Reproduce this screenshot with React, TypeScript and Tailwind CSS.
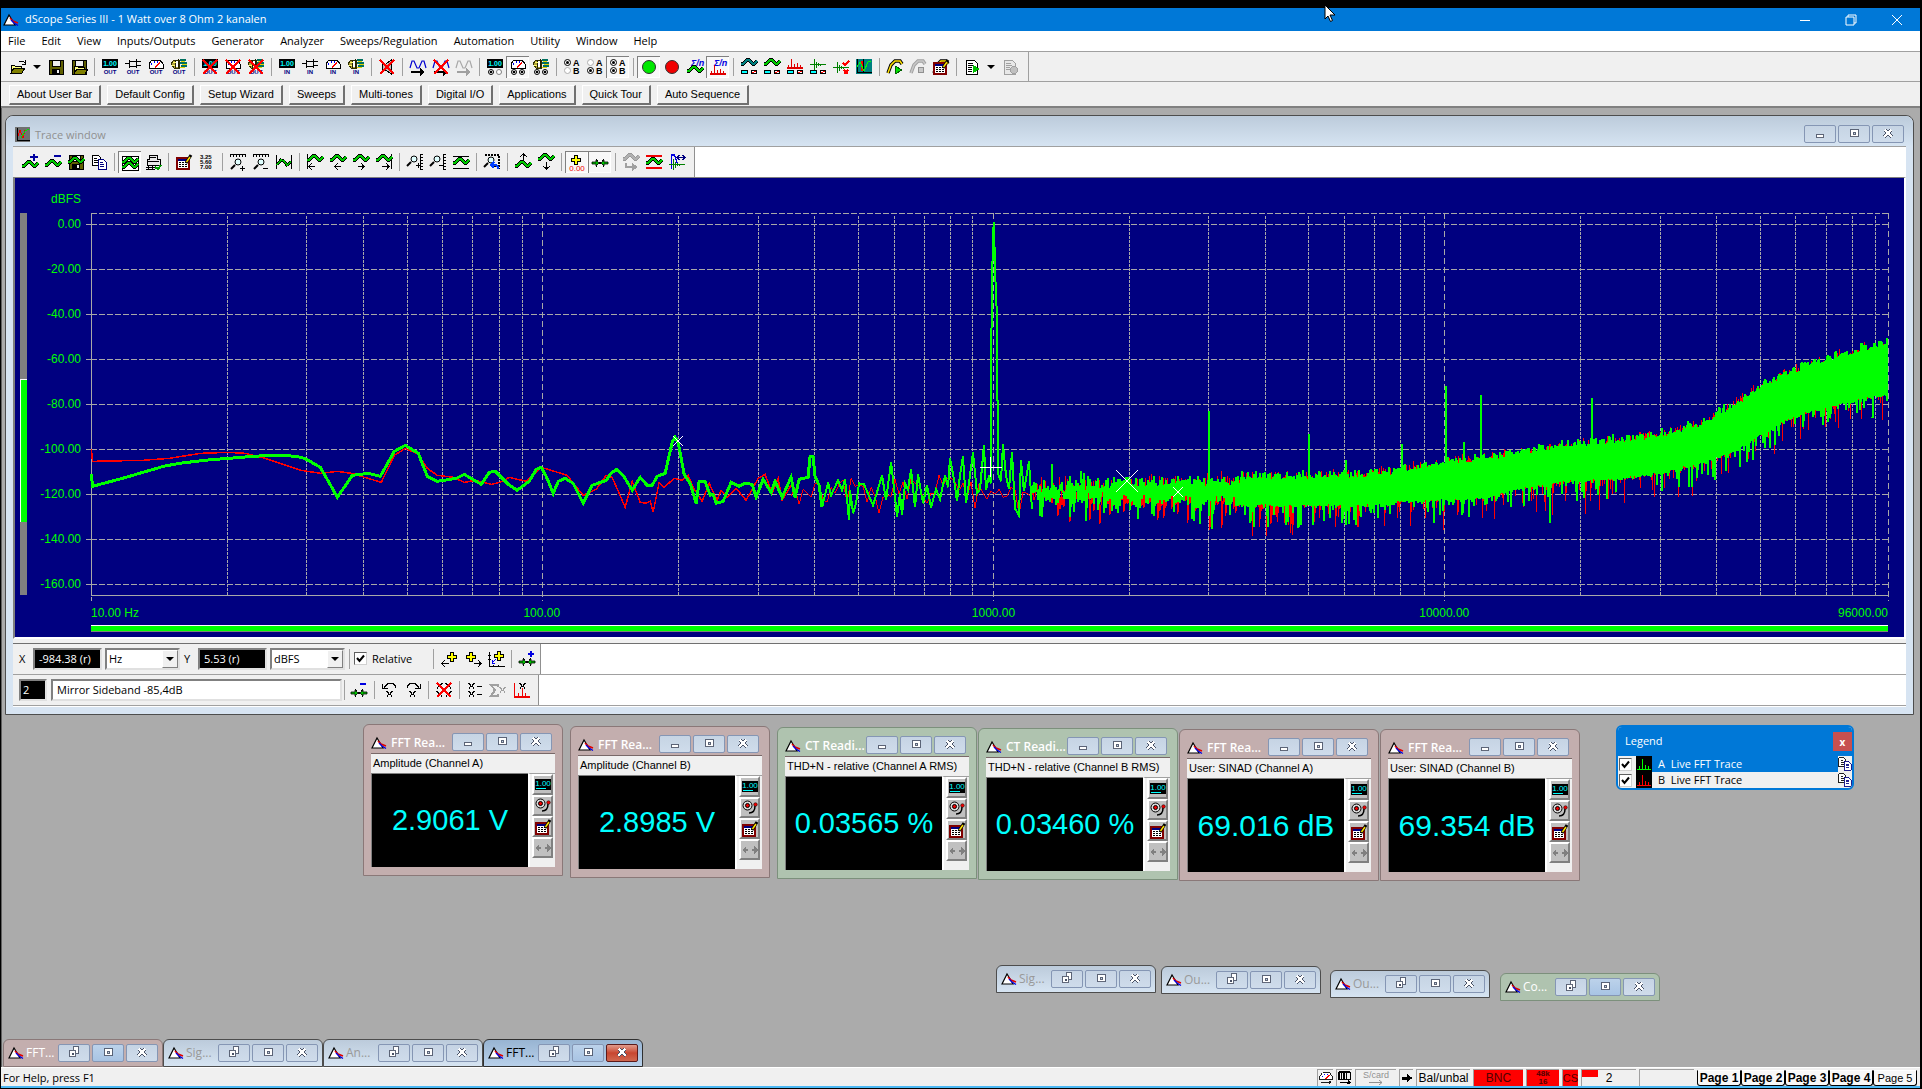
import { Fragment } from "react";
import type { ReactNode } from "react";
import clsx from "clsx";

/* ---------- icon parts, all on a 16x16 grid ---------- */

const RED = "#e00000";
const NAVY = "#000080";

function Icon({ children, className = "w-4 h-4" }: { children: ReactNode; className?: string }) {
  return (
    <svg viewBox="0 0 16 16" className={clsx("shrink-0 overflow-visible", className)} fill="none" shapeRendering="crispEdges" aria-hidden="true">
      {children}
    </svg>
  );
}

function Wave({ x = 0, y = 8, color = "#00c800", edge = "#000" }: { x?: number; y?: number; color?: string; edge?: string }) {
  const d = `M${x} ${y + 3}h2l4 -4h2l4 4h1l3 -3`;
  return (
    <>
      <path d={d} stroke={edge} strokeWidth="4" />
      <path d={d} stroke={color} strokeWidth="2" />
    </>
  );
}

const Cross = () => <path d="M1 1l14 14M15 1L1 15" stroke="#ff0000" strokeWidth="2" />;

function Caption({ text }: { text: string }) {
  return (
    <text x="8" y="15" textAnchor="middle" fontSize="6" fontWeight="bold" fill={NAVY} className="font-['Liberation_Sans']">
      {text}
    </text>
  );
}

const Display = () => (
  <>
    <rect x="0" y="0" width="16" height="9" fill="#000" />
    <text x="8" y="7" textAnchor="middle" fontSize="7" fontWeight="bold" fill="#00ffff" className="font-['Liberation_Sans']">
      1.00
    </text>
  </>
);

const Jack = () => (
  <path d="M0 4.500h4M4.500 1v8M4.500 2.500h7v5h-7M11.500 0v9M12 2.500h4M12 6.500h4" stroke="#000" />
);

const Gauge = ({ y = 0 }: { y?: number }) => (
  <>
    <path d={`M1 ${y + 9}v-4l3 -4h8l3 4v4z`} fill="#fff" stroke="#000" />
    <path d={`M7 ${y + 8}l5 -4`} stroke="#ff0000" strokeWidth="1.5" />
    <path d={`M3 ${y + 5}h1M6 ${y + 3}h1M9 ${y + 3}h1`} stroke="#0000ff" strokeWidth="1.5" />
  </>
);

const Knob = () => (
  <>
    <path d="M0 5l3 -4h5v8h-5z" fill="#b0a040" stroke="#303000" />
    <path d="M4.500 1v8M7.500 0v9" stroke="#202000" />
    <path d="M6 2v6" stroke="#fff" strokeWidth="2" />
    <path d="M9 1h6M9 4h7M10 7h6" stroke="#007060" strokeWidth="2" />
    <path d="M10 2.500h4M11 5.500h5M9 8.500h5" stroke="#e0d000" />
    <path d="M2 3.500h3M1 6.500h3" stroke="#ffff60" />
  </>
);

const Dots = ({ a = true, b = false }: { a?: boolean; b?: boolean }) => (
  <g shapeRendering="auto">
    <circle cx="4" cy="13" r="2.500" fill="#fff" stroke="#000" />
    <circle cx="12" cy="13" r="2.500" fill="#fff" stroke={b ? "#000" : "#808080"} />
    {a && <circle cx="4" cy="13" r="1.300" fill="#000" />}
    {b && <circle cx="12" cy="13" r="1.300" fill="#000" />}
  </g>
);

const AB = ({ a, b }: { a: boolean; b: boolean }) => (
  <g shapeRendering="auto">
    {[a, b].map((on, i) => (
      <Fragment key={i}>
        <circle cx="3.500" cy={3.5 + i * 8} r="3" fill="#fff" stroke={on ? "#000" : "#b0b0b0"} />
        {on && <circle cx="3.500" cy={3.5 + i * 8} r="1.500" fill="#000" />}
        <text x="9" y={7 + i * 8} fontSize="9" fontWeight="bold" fill="#000" className="font-['Liberation_Sans']">
          {i === 0 ? "A" : "B"}
        </text>
      </Fragment>
    ))}
  </g>
);

const Folder = ({ x = 0, y = 0 }: { x?: number; y?: number }) => (
  <>
    <path d={`M${x + 1} ${y + 13}v-8h3l1 1h6v3`} fill="#ffff80" stroke="#000" />
    <path d={`M${x + 1} ${y + 13}l3 -5h11l-3 5z`} fill="#808000" stroke="#000" />
  </>
);

const Floppy = () => (
  <>
    <path d="M1 1h14v14h-14z" fill="#606000" stroke="#000" />
    <path d="M4 1h8v6h-8z" fill="#f0f0f0" stroke="#000" />
    <path d="M4 10h8v5h-8z" fill="#000" />
    <path d="M9 11h2v3h-2z" fill="#f0f0f0" />
  </>
);

const Pages = () => (
  <>
    <path d="M1 1h6l2 2v8h-8z" fill="#fff" stroke="#000" />
    <path d="M3 4h3M3 6h4M3 8h4" stroke="#000" />
    <path d="M7 5h5l3 3v7h-8z" fill="#fff" stroke={NAVY} />
    <path d="M9 8h3M9 10h4M9 12h4" stroke={NAVY} />
  </>
);

const Sine = ({ color = "#0000d0" }: { color?: string }) => (
  <path d="M0 9l2 -7h2l3 7h2l3 -7h2l2 7" stroke={color} strokeWidth="1.2" shapeRendering="auto" />
);

const Arrow = ({ color = "#000", y = 12 }: { color?: string; y?: number }) => (
  <path d={`M1 ${y}h9v-3l4 4l-4 4v-3h-9z`} fill={color} />
);

const Spectrum = ({ y = 15 }: { y?: number }) => (
  <path
    d={`M0 ${y}h16M1.500 ${y}v-3M4.500 ${y}v-9M7.500 ${y}v-4M10.500 ${y}v-5M13.500 ${y}v-3`}
    stroke={RED}
    strokeWidth="1.500"
  />
);

const Burst = ({ y = 6, color = "#008000" }: { y?: number; color?: string }) => (
  <path d={`M0 ${y}.500h16M4.500 ${y - 5}v11M6.500 ${y - 2}v6M8.500 ${y - 1}v3M10.500 ${y}v2`} stroke={color} />
);

const Sigma = () => (
  <text x="4" y="7" fontSize="9" fontWeight="bold" fontStyle="italic" fill="#0000e0" className="font-['Liberation_Sans']">
    Σ/n
  </text>
);

const Panels = () => (
  <>
    <rect x="0.500" y="11.500" width="6" height="3" fill="#00ffff" stroke="#000" />
    <rect x="10.500" y="11.500" width="5" height="3" fill="#fff" stroke="#000" />
    <path d="M11 14l4 -2" stroke="#f00" />
  </>
);

const Table = () => (
  <>
    <rect x="1" y="4" width="12" height="11" fill="#fff" stroke="#800000" strokeWidth="1.500" />
    <rect x="2" y="5" width="10" height="2" fill={NAVY} />
    <path d="M3 8.500h2M6 8.500h2M9 8.500h2M3 10.500h2M6 10.500h2M9 10.500h2M3 12.500h2M6 12.500h2M9 12.500h2" stroke="#000" />
    <g shapeRendering="auto">
      <path d="M10 9l5 -8" stroke="#000" strokeWidth="3" />
      <path d="M10.500 8l3.500 -5" stroke="#ffe000" strokeWidth="1.500" />
    </g>
  </>
);

const Lens = ({ x = 5, y = 6, plus = true }: { x?: number; y?: number; plus?: boolean }) => (
  <>
    <g shapeRendering="auto">
      <circle cx={x + 3} cy={y + 1} r="3" fill="#e0ffff" stroke="#000" />
      <path d={`M${x} ${y + 4}l-4 4`} stroke="#000" strokeWidth="2" />
    </g>
    <path d={plus ? `M${x + 5} ${y + 7.5}h5M${x + 7.5} ${y + 5}v5` : `M${x + 5} ${y + 7.5}h5`} stroke="#000" />
  </>
);

const RulerTop = () => <path d="M0 .500h16M.500 1v2M3.500 1v2M6.500 1v2M9.500 1v2M12.500 1v2M15.500 1v2" stroke="#000" />;
const RulerSide = () => <path d="M13.500 0v16M14 .500h2M14 3.500h2M14 6.500h2M14 9.500h2M14 12.500h2M14 15.500h2" stroke="#000" />;

const Plus = ({ x = 8, y = 5 }: { x?: number; y?: number }) => (
  <>
    <path d={`M${x} ${y - 5}v10M${x - 5} ${y}h10`} stroke="#000" strokeWidth="4" />
    <path d={`M${x} ${y - 4}v8M${x - 4} ${y}h8`} stroke="#ffff00" strokeWidth="2" />
  </>
);

const Hatch = ({ x, y, color = "#000" }: { x: number; y: number; color?: string }) => (
  <path d={`M${x} ${y}l5 6M${x + 5} ${y}l-5 6`} stroke={color} strokeWidth="1.500" strokeDasharray="1.500 .500" />
);

// two arrows pointing at a cross
const Marks = ({ y = 8 }: { y?: number }) => (
  <>
    <path d={`M0 ${y - 1}h4v-2l3 3l-3 3v-2h-4zM16 ${y - 1}h-4v-2l-3 3l3 3v-2h4z`} fill="#00c000" stroke="#000" strokeWidth=".8" shapeRendering="auto" />
    <path d={`M4 ${y - 4}l8 8M12 ${y - 4}l-8 8`} stroke="#000" strokeDasharray="1 1" />
  </>
);

const Turn = ({ flip }: { flip?: boolean }) => (
  <path d={flip ? "M2.500 6V4l3 -3h4l4 4v2M10 6.500h5.500V2" : "M13.500 6V4l-3 -3h-4l-4 4v2M6 6.500h-5.500V2"} stroke="#000" />
);

const RunCurve = ({ color = "#ffe000", edge = "#000" }: { color?: string; edge?: string }) => (
  <g shapeRendering="auto">
    <path d="M1 14l3 -8l4 -4h5l2 3" stroke={edge} strokeWidth="3.500" />
    <path d="M1 14l3 -8l4 -4h5l2 3" stroke={color} strokeWidth="1.500" />
  </g>
);

function Logo({ className = "w-4 h-4" }: { className?: string }) {
  return (
    <svg viewBox="0 0 16 14" className={clsx("shrink-0", className)} fill="none" aria-hidden="true">
      <path d="M1 12L6 2l6 10z" fill="#fff" stroke="#000" strokeWidth="1.200" />
      <path d="M7 5l3 3l5 2" stroke="#e00000" strokeWidth="1.600" />
      <path d="M8 7l3 3l4 2.500" stroke="#0000e0" strokeWidth="1.400" />
    </svg>
  );
}

/* ---------- toolbars ---------- */

type Tool = "sep" | "drop" | { label: string; icon: ReactNode; pressed?: boolean };

const t = (label: string, icon: ReactNode, pressed = false): Tool => ({ label, icon, pressed });

const mainTools: Tool[] = [
  t("Open", <><Folder y={1} /><path d="M9 2h4l2 2M15 1v4h-3" stroke="#000" /></>),
  "drop",
  t("Save", <Floppy />),
  t("Save configuration", <><Floppy /><Folder x={2} y={2} /></>),
  "sep",
  t("Signal generator", <><Display /><Caption text="OUT" /></>),
  t("Outputs", <><Jack /><Caption text="OUT" /></>),
  t("Output meters", <><Gauge /><Caption text="OUT" /></>),
  t("Output settings", <><Knob /><Caption text="OUT" /></>),
  "sep",
  t("Disable generator", <><Display /><Caption text="OUT" /><Cross /></>),
  t("Disable output meters", <><Gauge /><Caption text="OUT" /><Cross /></>),
  t("Disable output settings", <><Knob /><Caption text="OUT" /><Cross /></>),
  "sep",
  t("Signal analyzer", <><Display /><Caption text="IN" /></>),
  t("Inputs", <><Jack /><Caption text="IN" /></>),
  t("Input meters", <><Gauge /><Caption text="IN" /></>),
  t("Input settings", <><Knob /><Caption text="IN" /></>),
  "sep",
  t("Mute", <><path d="M3 5h4l5 -4v14l-5 -4h-4z" fill="#c0c0c0" stroke="#000" /><Cross /></>),
  "sep",
  t("Run sweep", <><Sine /><Arrow y={12} /></>),
  t("Stop sweep", <><Sine /><Arrow y={12} /><Cross /></>),
  t("Step sweep", <><Sine color="#a8a8a8" /><Arrow color="#a0a0a0" /></>),
  "sep",
  t("Reading source", <><Display /><Dots /></>),
  t("Meter source", <><Gauge /><Dots b /></>, true),
  t("Settings source", <><Knob /><Dots b /></>),
  "sep",
  t("Channel A", <AB a b={false} />),
  t("Channel B", <AB a={false} b />),
  t("Both channels", <AB a b />, true),
  "sep",
  t("Run", <circle cx="8" cy="8" r="6.500" fill="#00e800" stroke="#303030" shapeRendering="auto" />, true),
  t("Stop", <circle cx="8" cy="8" r="6.500" fill="#f00000" stroke="#303030" shapeRendering="auto" />),
  t("Average signal", <><Sigma /><Wave y={9} /></>),
  t("Average spectrum", <><Sigma /><Spectrum /></>, true),
  "sep",
  t("Generator wave", <><Wave y={2} color="#008080" /><Panels /></>),
  t("Scope trace", <><Wave y={2} /><Panels /></>),
  t("FFT trace", <><Spectrum y={9} /><Panels /></>),
  t("Impulse", <><Burst y={5} /><Panels /></>),
  t("Impulse check", <><Burst y={8} /><path d="M10 4l2 2l4 -4M11 11l4 4M15 11l-4 4" stroke="#f00" strokeWidth="1.500" /></>),
  t("Trace window", <><rect width="16" height="15" fill="#008080" /><path d="M1 0v13h15M7 0v13" stroke="#000" /><path d="M6 2v10" stroke="#f00" strokeWidth="2" /><path d="M1 8l3 -5l4 9l4 -9l3 -1" stroke="#00ff00" /></>),
  "sep",
  t("Run automation", <><RunCurve /><path d="M8 7l7 4l-7 4z" fill="#00e000" stroke="#006000" /></>),
  t("Stop automation", <><RunCurve color="#c8c8c8" edge="#a0a0a0" /><circle cx="11" cy="11" r="3" fill="#c8c8c8" stroke="#909090" /></>),
  t("Edit automation", <><RunCurve /><Table /></>),
  "sep",
  t("Run script", <><path d="M2 1h8l3 3v11h-11z" fill="#fff" stroke="#000" /><path d="M4 4.500h5M4 6.500h6M4 8.500h4M4 10.500h4M4 12.500h4" stroke="#000" /><path d="M9 6l7 4l-7 4z" fill="#00c000" /></>),
  "drop",
  t("Stop script", <><path d="M2 1h8l3 3v11h-11z" fill="#e8e8e8" stroke="#a0a0a0" /><path d="M4 4.500h5M4 6.500h6M4 8.500h4M4 10.500h4" stroke="#a0a0a0" /><circle cx="12" cy="11" r="3.500" fill="#c0c0c0" stroke="#a0a0a0" /></>),
];

const traceTools: Tool[] = [
  t("Add trace", <><Wave y={9} /><path d="M12 0v7M8 3h8" stroke="#0000a0" strokeWidth="2" /></>),
  t("Remove trace", <><Wave y={8} /><path d="M9 2h7" stroke="#0000a0" strokeWidth="2" /></>),
  t("Save trace", <><Floppy /><Wave y={5} /></>),
  t("Copy trace", <Pages />),
  "sep",
  t("Tile traces", <><rect x="0" y="1" width="16" height="14" fill="#fff" stroke="#000" /><Wave y={4} /><Wave y={9} /></>, true),
  t("Print", <><path d="M4 1h8v4h3v6h-13v-6h2z" fill="#e8e8e8" stroke="#000" /><path d="M5 3.500h6M3 7.500h11M1 13.500h9M1 15.500h9M3.500 12v4M7.500 12v4" stroke="#000" /><path d="M10 13l3 2l3 -4" stroke="#00a000" strokeWidth="2" /></>),
  "sep",
  t("Edit table", <Table />),
  t("Values", <g fill="#000" fontSize="6" fontWeight="bold" className="font-['Liberation_Sans']"><text x="1" y="5">3.25</text><text x="1" y="10">5.60</text><text x="1" y="15">7.00</text></g>),
  "sep",
  t("Zoom in X", <><RulerTop /><Lens x={5} y={7} /></>),
  t("Zoom out X", <><RulerTop /><Lens x={5} y={7} plus={false} /></>),
  t("Fit X", <><path d="M.500 1v14M15.500 1v14" stroke="#000" /><path d="M1 11l4 -5l3 1l3 4l4 -3" stroke="#000" strokeWidth="3" /><path d="M1 11l4 -5l3 1l3 4l4 -3" stroke="#00c000" strokeWidth="1.500" /></>),
  "sep",
  t("Scroll start", <><path d="M.500 0v15" stroke="#000" /><Wave y={3} /><path d="M2 12.500h6M5 9l-3 3.500l3 3.500" stroke="#000" /></>),
  t("Scroll left", <><Wave y={3} /><path d="M5 12.500h6M8 9l-3 3.500l3 3.500" stroke="#000" /></>),
  t("Scroll right", <><Wave y={3} /><path d="M5 12.500h6M8 9l3 3.500l-3 3.500" stroke="#000" /></>),
  t("Scroll end", <><path d="M15.500 0v15" stroke="#000" /><Wave y={3} /><path d="M6 12.500h7M10 9l3 3.500l-3 3.500" stroke="#000" /></>),
  "sep",
  t("Zoom in Y", <><RulerSide /><Lens x={4} y={4} /></>),
  t("Zoom out Y", <><RulerSide /><Lens x={4} y={4} plus={false} /></>),
  t("Fit Y", <><path d="M0 2h16M0 14h16" stroke="#000" /><Wave y={6} /></>),
  "sep",
  t("Undo zoom", <><path d="M1 1h14v14" stroke="#000" strokeDasharray="2 1" strokeWidth="2" /><Lens x={4} y={5} plus={false} /><path d="M7 11h5l2 2v2M10 8l-3 3l3 3" stroke="#0040ff" strokeWidth="2" /></>),
  "sep",
  t("Shift up", <><Wave y={9} /><path d="M8.500 0v7M5 3l3.500 -3l3.500 3" stroke="#000" /></>),
  t("Shift down", <><Wave y={2} /><path d="M8.500 8v7M5 12l3.500 3l3.500 -3" stroke="#000" /></>),
  "sep",
  t("Cursor", <><Plus x={7} y={5} /><text x="8" y="16" textAnchor="middle" fontSize="8" fill="#f00000" className="font-['Liberation_Sans']">0.00</text></>, true),
  t("Marks", <Marks />, true),
  "sep",
  t("Transfer", <><Wave y={2} color="#b0b0b0" edge="#989898" /><path d="M3 9v4h9M9 10l4 3l-4 3" stroke="#a0a0a0" strokeWidth="2" /></>),
  t("Limits", <><path d="M0 2h16M0 14h16" stroke="#f00000" strokeWidth="1.500" /><Wave y={6} /></>),
  t("Window X", <><path d="M2.500 15V1h3l3 9" stroke="#0000e0" strokeWidth="1.500" /><Burst y={10} /><path d="M8 3.500h8M10 1l-2 2.500l2 2.500M14 1l2 2.500l-2 2.500" stroke={NAVY} strokeWidth="1.500" /></>),
];

const cursorTools: Tool[] = [
  t("Cursor left", <><Plus x={10} y={6} /><path d="M0 12.500h7M3 9l-3 3.500l3 3.500" stroke="#000" /></>),
  t("Cursor right", <><Plus x={6} y={6} /><path d="M9 12.500h7M13 9l3 3.500l-3 3.500" stroke="#000" /></>),
  t("Cursor to origin", <><path d="M1.500 1v14.500h15M0 4.500h3M0 8.500h3M5.500 14v2M10.500 14v2" stroke="#000" /><path d="M8 8l-4 4M4 9v3h3" stroke="#0000f0" /><Plus x={11} y={5} /></>),
  "sep",
  t("Add mark", <><Marks y={11} /><path d="M12 0v6M9 3h6" stroke="#0000e0" strokeWidth="2" /></>),
];

const markTools: Tool[] = [
  t("Remove mark", <><Marks y={11} /><path d="M9 2h6" stroke="#0000e0" strokeWidth="2" /></>),
  "sep",
  t("Previous mark", <><Turn /><Hatch x={5} y={9} /></>),
  t("Next mark", <><Turn flip /><Hatch x={5} y={9} /></>),
  "sep",
  t("Clear marks", <><Hatch x={1} y={1} /><Hatch x={10} y={1} /><Hatch x={1} y={9} /><Hatch x={10} y={9} /><Cross /></>),
  "sep",
  t("List marks", <><Hatch x={2} y={1} /><Hatch x={2} y={9} /><path d="M10 4.500h5M10 12.500h5" stroke="#000" /></>),
  t("Sum marks", <><path d="M8 5V3H1l4 5l-4 6h7v-2" stroke="#a0a0a0" strokeWidth="2" /><Hatch x={10} y={5} color="#a0a0a0" /></>),
  t("Mark harmonics", <><path d="M1.500 1v14h15M5.500 15v-4M9.500 15V6M12.500 15v-4" stroke="#f00000" strokeWidth="1.500" /><Hatch x={7} y={1} /></>),
];

function Toolbar({ tools }: { tools: Tool[] }) {
  return (
    <div role="toolbar" className="flex items-center">
      {tools.map((tool, i) => {
        if (tool === "sep") {
          return <span key={i} className="w-2 h-[18px] flex justify-center"><span className="w-px bg-[#a0a0a0]" /></span>;
        }
        if (tool === "drop") {
          return (
            <button key={i} aria-label="More" className="w-[15px] h-[22px] flex items-center justify-center">
              <span className="border-x-4 border-t-4 border-x-transparent border-t-black" />
            </button>
          );
        }
        return (
          <button
            key={i}
            aria-label={tool.label}
            className={clsx(
              "w-[23px] h-[22px] flex items-center justify-center",
              tool.pressed && "bg-[#f8f8f8] border-t border-l border-[#808080] shadow-[inset_-1px_-1px_0_#fff]"
            )}
          >
            <Icon>{tool.icon}</Icon>
          </button>
        );
      })}
    </div>
  );
}

/* ---------- FFT plot ---------- */

const DECADE = 451.4;
const WIDTH = 1798;
const HEIGHT = 382;

const fx = (hz: number) => Math.round(DECADE * Math.log10(hz / 10));

const minorLines = [10, 100, 1000, 10000].flatMap((d) =>
  [2, 3, 4, 5, 6, 7, 8, 9].map((n) => n * d).filter((f) => f < 96000)
);

const levels = ["0.00", "-20.00", "-40.00", "-60.00", "-80.00", "-100.00", "-120.00", "-140.00", "-160.00"];

type Pt = [number, number];

const greenLow: Pt[] = [
  [0, 261], [1, 273], [31, 265], [72, 253], [88, 250], [113, 247], [137, 245], [162, 243], [178, 242], [194, 242],
  [210, 244], [217, 247], [229, 254], [237, 268], [246, 284], [261, 262], [277, 260], [289, 263], [303, 238], [314, 232],
  [327, 240], [336, 263], [346, 268], [365, 265], [373, 261], [390, 271], [398, 259], [404, 258], [417, 271], [426, 277],
  [438, 268], [445, 256], [450, 254], [455, 263], [462, 280], [467, 268], [474, 265], [482, 270], [492, 290], [501, 272],
  [515, 267], [520, 260], [525, 256], [532, 262], [541, 277], [549, 264], [556, 272], [561, 272], [566, 263], [574, 260],
  [581, 229], [584, 224], [587, 229], [593, 261], [599, 270], [605, 290], [608, 268], [614, 268], [619, 282], [622, 281],
  [625, 290], [632, 288], [640, 269], [648, 273], [654, 270], [661, 271], [665, 284], [672, 266], [680, 279], [684, 268],
  [691, 284], [700, 264], [704, 284], [708, 266], [717, 264], [719, 243], [722, 243], [724, 263], [728, 272], [731, 294],
];

const greenMid: Pt[] = [
  [731, 294], [737, 269], [740, 282], [747, 267], [751, 277], [754, 266], [758, 307], [759, 277], [762, 300], [765, 290],
  [768, 270], [773, 271], [782, 292], [791, 262], [795, 287], [800, 249], [804, 284], [806, 304], [809, 280], [811, 302],
  [814, 270], [817, 276], [820, 256], [824, 294], [827, 261], [832, 290], [836, 272], [840, 294], [845, 276], [849, 286],
  [854, 262], [857, 274], [859, 245], [863, 266], [866, 288], [869, 262], [872, 243], [875, 290], [879, 262], [882, 239],
  [886, 280], [889, 276], [893, 232], [895, 277], [898, 262], [900, 270], [900, 156], [901, 80], [902, 19], [903, 9],
  [904, 55], [906, 104], [907, 260], [910, 268], [912, 231], [915, 262], [918, 276], [921, 239], [924, 295], [928, 302],
  [930, 247], [933, 278], [938, 248], [941, 296],
];

const redLow: Pt[] = [
  [0, 236], [1, 248], [51, 247], [78, 245], [109, 240], [137, 239], [154, 240], [174, 245], [210, 257], [229, 260],
  [246, 258], [260, 260], [290, 269], [303, 242], [314, 235], [327, 241], [336, 255], [346, 262], [362, 264], [373, 269],
  [384, 267], [400, 271], [409, 269], [418, 264], [435, 268], [450, 254], [460, 257], [476, 262], [492, 282], [505, 276],
  [515, 262], [521, 264], [534, 294], [541, 268], [549, 289], [555, 290], [559, 288], [562, 299], [568, 269], [573, 274],
  [583, 265], [591, 267], [597, 262], [602, 274], [611, 288], [618, 270], [626, 287], [630, 277], [636, 284], [645, 275],
  [655, 287], [667, 265], [674, 261], [681, 280], [687, 265], [691, 287], [700, 272],
];

// [x, top, bottom] of the noise band above 1 kHz
const band: [number, number, number][] = [
  [941, 268, 286], [990, 266, 289], [1060, 265, 291], [1120, 265, 291], [1189, 264, 292], [1229, 264, 291],
  [1270, 263, 293], [1311, 258, 288], [1352, 250, 286], [1393, 246, 284], [1434, 239, 274], [1475, 233, 268],
  [1528, 228, 265], [1569, 223, 260], [1610, 212, 249], [1639, 195, 240], [1668, 176, 222], [1696, 161, 206],
  [1721, 151, 197], [1762, 140, 187], [1797, 130, 180],
];

// harmonics and stray tones: [x, peak]
const peaks: Pt[] = [
  [961, 251], [990, 258], [1118, 198], [1218, 221], [1255, 247], [1311, 231], [1355, 173], [1373, 229], [1390, 182],
  [1501, 185],
];

function random(seed: number) {
  let s = seed;
  return () => {
    s = (s * 1103515245 + 12345) % 2147483648;
    return s / 2147483648;
  };
}

function bandAt(x: number) {
  const i = Math.max(1, band.findIndex((b) => b[0] >= x));
  const [x0, t0, b0] = band[i - 1];
  const [x1, t1, b1] = band[i];
  const k = (x - x0) / (x1 - x0);
  return [t0 + (t1 - t0) * k, b0 + (b1 - b0) * k];
}

function noise(seed: number, reach: number) {
  const rnd = random(seed);
  let d = "";
  for (let x = 941; x < WIDTH; x += x < 1150 ? 2 : 1) {
    const [top, bottom] = bandAt(x);
    const loose = x < 1020 ? 14 : x < 1150 ? 9 : 3;
    const hi = Math.round(top + rnd() * loose - rnd() ** 3 * 8);
    const lo = Math.round(bottom - rnd() * loose + rnd() ** 8 * reach + (x < 1150 ? rnd() ** 3 * 12 : 2));
    d += `${d ? "L" : "M"}${x} ${hi}V${lo}`;
  }
  return d;
}

function wander(from: number, to: number, seed: number) {
  const rnd = random(seed);
  const pts: Pt[] = [];
  for (let x = from; x < to; x += 4) pts.push([x, Math.round(262 + rnd() * 26 + rnd() ** 6 * 22)]);
  return pts;
}

const line = (pts: Pt[]) => "M" + pts.map((p) => p.join(" ")).join("L");

const redMid = wander(700, 941, 21);
const redNoise = noise(77, 34);
const greenNoise = noise(5, 22);

function Mark({ x, y, r }: { x: number; y: number; r: number }) {
  return <path d={`M${x - r} ${y - r}l${2 * r} ${2 * r}M${x + r} ${y - r}l${-2 * r} ${2 * r}`} stroke="#fff" />;
}

function Plot() {
  return (
    <svg viewBox="0 0 1890 459" className="block w-full bg-[#000080] font-['Liberation_Sans']" fill="none" shapeRendering="crispEdges" role="img" aria-label="FFT trace">
      <rect x="5" y="35" width="7" height="382" fill="#808080" />
      <rect x="5" y="201" width="7" height="143" fill="#00ff00" />
      <path d="M5.500 344v-142.500h6.500" stroke="#fff" />

      <g fill="#00ff00" fontSize="12" textAnchor="end">
        <text x="66" y="25">dBFS</text>
        {levels.map((label, i) => (
          <text key={label} x="66" y={50 + i * 45}>{label}</text>
        ))}
        <text x="1874" y="439">96000.00</text>
      </g>
      <g fill="#00ff00" fontSize="12" textAnchor="middle">
        <text x="76" y="439" textAnchor="start">10.00 Hz</text>
        <text x="527" y="439">100.00</text>
        <text x="979" y="439">1000.00</text>
        <text x="1430" y="439">10000.00</text>
      </g>

      <g transform="translate(76.5 35.5)">
        <g stroke="#a8a8a8">
          <path d={`M0 0H${WIDTH}`} strokeDasharray="6 2" />
          {levels.map((label, i) => (
            <Fragment key={label}>
              <path d={`M-5 ${11 + i * 45}H0`} />
              <path d={`M0 ${11 + i * 45}H${WIDTH}`} strokeDasharray="6 2" />
            </Fragment>
          ))}
          {minorLines.map((f) => (
            <path key={f} d={`M${fx(f)} 3V${HEIGHT}`} strokeDasharray="3 1" />
          ))}
          {[100, 1000, 10000, 96000].map((f) => (
            <path key={f} d={`M${fx(f)} 0V${HEIGHT + 6}`} strokeDasharray="6 3" />
          ))}
          <path d={`M0 0V${HEIGHT}H${WIDTH}M0 ${HEIGHT + 2}v4`} />
        </g>

        <path d={line(redLow)} stroke="#ff0000" strokeWidth="1.500" />
        <path d={line(redMid)} stroke="#ff0000" />
        <path d={redNoise} stroke="#ff0000" />
        <path d={line(greenLow)} stroke="#00ff00" strokeWidth="3" />
        <path d={line(greenMid)} stroke="#00ff00" strokeWidth="2" />
        <path d={greenNoise} stroke="#00ff00" strokeWidth="2" />
        {peaks.map(([x, y]) => (
          <path key={x} d={`M${x} ${y}V270`} stroke="#00ff00" strokeWidth="2" />
        ))}
        <path d="M1459 260V310M1118 280V303M1208 280V314M1222 280V312M1343 280V310" stroke="#00ff00" strokeWidth="2" />

        <path d="M889 254h22M900 244v20" stroke="#fff" />
        <Mark x={587} y={228} r={5} />
        <Mark x={1036} y={268} r={11} />
        <Mark x={1087} y={279} r={5} />
      </g>

      <rect x="76" y="447" width="1798" height="7" fill="#00ff00" />
      <path d="M76 447.500h1798" stroke="#fff" />
      <path d="M76 453.500h1798" stroke="#808080" />
    </svg>
  );
}

/* ---------- windows ---------- */

type Tone = "plain" | "pink" | "green" | "active";

const glyphs = {
  min: <rect x="4" y="9" width="8" height="3" fill="#fff" stroke="#4a5266" />,
  max: <><rect x="4" y="3" width="9" height="8" fill="#fff" stroke="#4a5266" /><rect x="7" y="6" width="3" height="2" fill="#c8d4e4" stroke="#4a5266" /></>,
  restore: <><rect x="7" y="1" width="6" height="7" fill="#fff" stroke="#4a5266" /><rect x="3" y="5" width="7" height="7" fill="#fff" stroke="#4a5266" /><rect x="6" y="8" width="2" height="2" fill="#4a5266" /></>,
  close: <><path d="M4 3l8 8M12 3l-8 8" stroke="#4a5266" strokeWidth="4" /><path d="M4 3l8 8M12 3l-8 8" stroke="#fff" strokeWidth="2" /></>,
};

function Caps({ kinds, tone = "plain" }: { kinds: (keyof typeof glyphs)[]; tone?: Tone }) {
  return (
    <div className="flex gap-0.5 shrink-0">
      {kinds.map((kind) => (
        <button
          key={kind}
          aria-label={kind}
          className={clsx(
            "w-8 h-[18px] flex items-center justify-center border rounded-[2px]",
            tone === "active" && kind === "close"
              ? "border-[#5c1a1a] bg-linear-to-b from-[#e09a8c] via-[#c84630] to-[#d06850]"
              : tone !== "plain" && kind === "max"
                ? "border-[#8596b4] bg-linear-to-b from-[#bcd2ea] to-[#a8c4e4]"
                : "border-[#8596b4] bg-linear-to-b from-[#c6d4e4] to-[#cfdceb]"
          )}
        >
          <Icon className="w-4 h-[14px]">{glyphs[kind]}</Icon>
        </button>
      ))}
    </div>
  );
}

const frames = {
  plain: "bg-linear-to-b from-[#bccbdb] to-[#d6e4f2] border-[#4d4d4d] text-[#999]",
  active: "bg-linear-to-b from-[#98b4d2] to-[#b8d0ea] border-[#303030] text-black",
  pink: "bg-[#c3aeae] border-[#8a7878] text-white",
  green: "bg-[#afc3af] border-[#7c907c] text-white",
};

function Minimised({ title, tone, className }: { title: string; tone: Tone; className?: string }) {
  return (
    <section className={clsx("w-40 h-7 pl-1 pr-1 flex items-center border rounded-t-md font-['Open_Sans'] text-xs", frames[tone], className)}>
      <Logo />
      <h2 className="flex-1 ml-0.5 whitespace-nowrap">{title}</h2>
      <Caps kinds={["restore", "max", "close"]} tone={tone} />
    </section>
  );
}

const sideIcons: [string, ReactNode][] = [
  ["Reading setup", <><rect y="2" width="16" height="11" fill="#000" /><text x="8" y="9" textAnchor="middle" fontSize="8" fill="#00ffff" className="font-['Liberation_Sans']">1.00</text><path d="M1 11.500h10" stroke="#00ffff" /></>],
  ["Alarm", <g shapeRendering="auto"><circle cx="5.500" cy="5.500" r="4.500" fill="#d8d8d8" stroke="#000" /><circle cx="5.500" cy="5.500" r="2" fill="#f00000" stroke="#000" /><path d="M7 13c4 0 6 -3 6 -7" stroke="#000" strokeWidth="1.500" /><circle cx="13.500" cy="4.500" r="1.800" fill="#f00000" stroke="#000" strokeWidth=".5" /></g>],
  ["Edit", <Table />],
  ["Scroll", <><path d="M0 8l4 -4v3h2v2h-2v3z" fill="#808080" /><path d="M16 8l-4 -4v3h-2v2h2v3z" fill="#808080" /></>],
];

type Reading = { title: string; label: string; value: string; tone: Tone; size: string; className: string };

function Readout({ title, label, value, tone, size, className }: Reading) {
  return (
    <section className={clsx("absolute w-[200px] pb-2 px-[7px] border rounded-t-md", frames[tone], className)}>
      <header className="flex items-end h-[26px] pr-[3px]">
        <Logo />
        <h2 className="flex-1 ml-1 font-['Open_Sans'] text-xs font-semibold leading-4 whitespace-nowrap">{title}</h2>
        <Caps kinds={["min", "max", "close"]} />
      </header>
      <div className="mt-0.5 border-t border-[#786868] bg-[#f0f0f0] text-black">
        <p className="h-[19px] pl-0.5 font-['Liberation_Sans'] text-[11px] leading-[18px] whitespace-nowrap">{label}</p>
        <div className="flex">
          <output className={clsx("flex-1 h-[94px] flex items-center justify-center bg-black border-t border-l border-[#808080] font-['Liberation_Sans'] text-[#00ffff] whitespace-nowrap", size)}>
            {value}
          </output>
          <div className="w-[27px] pl-0.5 border-l-2 border-t border-l-white border-t-[#a0a0a0] flex flex-col">
            {sideIcons.map(([name, icon]) => (
              <button
                key={name}
                aria-label={name}
                className="w-[21px] h-[21px] flex items-center justify-center bg-[#c0c0c0] border-2 border-t-white border-l-white border-b-[#808080] border-r-[#808080]"
              >
                <Icon>{icon}</Icon>
              </button>
            ))}
          </div>
        </div>
      </div>
    </section>
  );
}

const readouts: Reading[] = [
  { title: "FFT Rea...", label: "Amplitude (Channel A)", value: "2.9061 V", tone: "pink", size: "text-[29px]", className: "left-[361px] top-[616px]" },
  { title: "FFT Rea...", label: "Amplitude (Channel B)", value: "2.8985 V", tone: "pink", size: "text-[29px]", className: "left-[568px] top-[618px]" },
  { title: "CT Readi...", label: "THD+N - relative (Channel A RMS)", value: "0.03565 %", tone: "green", size: "text-[29px]", className: "left-[775px] top-[619px]" },
  { title: "CT Readi...", label: "THD+N - relative (Channel B RMS)", value: "0.03460 %", tone: "green", size: "text-[29px]", className: "left-[976px] top-[620px]" },
  { title: "FFT Rea...", label: "User: SINAD (Channel A)", value: "69.016 dB", tone: "pink", size: "text-[30px]", className: "left-[1177px] top-[621px]" },
  { title: "FFT Rea...", label: "User: SINAD (Channel B)", value: "69.354 dB", tone: "pink", size: "text-[30px]", className: "left-[1378px] top-[621px]" },
];

function Tick({ id, label }: { id: string; label: string }) {
  return (
    <span className="grid shrink-0">
      <input
        id={id}
        type="checkbox"
        defaultChecked
        aria-label={label}
        className="peer col-start-1 row-start-1 appearance-none w-[13px] h-[13px] bg-white border border-t-[#606060] border-l-[#606060] border-b-[#d0d0d0] border-r-[#d0d0d0]"
      />
      <svg viewBox="0 0 13 13" className="col-start-1 row-start-1 w-[13px] h-[13px] pointer-events-none invisible peer-checked:visible" fill="none" aria-hidden="true">
        <path d="M3 6l2.500 3L10 3.500" stroke="#000" strokeWidth="2" />
      </svg>
    </span>
  );
}

function Legend() {
  const rows = [
    { ch: "A", color: "#00ff00", active: true },
    { ch: "B", color: "#ff0000", active: false },
  ];
  return (
    <section className="absolute left-[1614px] top-[617px] w-[238px] border-2 border-[#0078d7] rounded-md bg-[#f0f0f0] font-['Open_Sans'] text-[11px] overflow-hidden">
      <header className="h-[29px] pl-[7px] flex items-center justify-between bg-[#0078d7] text-white">
        <h2>Legend</h2>
        <button aria-label="Close legend" className="w-[19px] h-[19px] bg-[#c75050] text-[10px] leading-none font-bold">x</button>
      </header>
      {rows.map((r) => (
        <div key={r.ch} className="flex items-center h-4 pl-px gap-1">
          <Tick id={`trace-${r.ch}`} label={`Trace ${r.ch}`} />
          <div className={clsx("flex-1 flex items-center h-4", r.active && "bg-[#0078d7] text-white")}>
            <Icon>
              <rect width="16" height="16" fill="#000" />
              <path d="M1 13h14M3 13v-3M6 13V3M9 13V9M12 13v-3" stroke={r.color} />
            </Icon>
            <label htmlFor={`trace-${r.ch}`} className="ml-1.5 whitespace-pre">{r.ch}  Live FFT Trace</label>
          </div>
          <button aria-label={`Copy trace ${r.ch}`} className="-ml-1"><Icon className="w-3.5 h-3.5"><Pages /></Icon></button>
        </div>
      ))}
    </section>
  );
}

const sunken = "border-2 border-t-[#808080] border-l-[#808080] border-b-[#e0e0e0] border-r-[#e0e0e0]";

function UnitSelect({ label, unit }: { label: string; unit: string }) {
  return (
    <span className="grid">
      <select aria-label={label} defaultValue={unit} className={clsx("col-start-1 row-start-1 appearance-none w-[75px] h-[22px] pl-0.5 bg-white text-[11px]", sunken)}>
        <option>{unit}</option>
      </select>
      <span className="col-start-1 row-start-1 self-center justify-self-end mr-0.5 w-4 h-[18px] flex items-center justify-center bg-[#f0f0f0] border border-t-white border-l-white border-b-[#808080] border-r-[#808080] pointer-events-none">
        <span className="border-x-4 border-t-4 border-x-transparent border-t-black" />
      </span>
    </span>
  );
}

function TraceWindow() {
  return (
    <section className="border border-[#4d4d4d] rounded-t-lg bg-[#d7e4f2] px-[7px] pb-[7px] font-['Open_Sans'] text-[11px]">
      <header className="-mx-[7px] px-[9px] pb-[3px] h-[30px] flex items-end rounded-t-lg bg-linear-to-b from-[#bccbdb] to-[#d6e4f2] text-[#909090]">
        <Icon>
          <rect width="15" height="15" fill="#707070" />
          <path d="M2 1v12h13" stroke="#000" />
          <path d="M3 9l2 -6l3 8l2 -8" stroke="#f00000" />
          <path d="M6 11l4 -7l4 -2" stroke="#00e000" />
        </Icon>
        <h2 className="flex-1 ml-1">Trace window</h2>
        <Caps kinds={["min", "max", "close"]} />
      </header>

      <div className="h-[31px] flex bg-white border-t border-[#a0a0a0]">
        <div className="flex items-center pl-[5px] pr-1.5 bg-[#f0f0f0] border-r border-r-[#909090]">
          <Toolbar tools={traceTools} />
        </div>
      </div>

      <div className="border-x-2 border-t border-b-2 border-l-[#808080] border-t-[#808080] border-r-white border-b-white">
        <Plot />
      </div>
      <div className="h-1 bg-[#f0f0f0]" />

      <div className="bg-white border-t border-[#707070]">
        <div className="h-[30px] flex">
          <div className="w-[528px] pl-1.5 flex items-center bg-[#f0f0f0] border-r border-r-[#909090]">
            <label htmlFor="cursor-x" className="w-3.5">X</label>
            <input id="cursor-x" defaultValue="-984.38 (r)" className={clsx("w-[69px] h-[22px] px-1 mr-[3px] bg-black text-white", sunken)} />
            <UnitSelect label="X unit" unit="Hz" />
            <label htmlFor="cursor-y" className="w-3.5 ml-1">Y</label>
            <input id="cursor-y" defaultValue="5.53 (r)" className={clsx("w-[69px] h-[22px] px-1 mr-[3px] bg-black text-white", sunken)} />
            <UnitSelect label="Y unit" unit="dBFS" />
            <span className="w-px h-5 mx-1 bg-[#a0a0a0]" />
            <Tick id="relative" label="Relative" />
            <label htmlFor="relative" className="ml-[5px] mr-[21px]">Relative</label>
            <span className="w-px h-5 mr-1 bg-[#a0a0a0]" />
            <Toolbar tools={cursorTools} />
          </div>
        </div>
        <div className="h-[32px] flex border-t border-b border-[#a0a0a0]">
          <div className="w-[526px] pl-1.5 flex items-center bg-[#f0f0f0] border-r border-r-[#909090]">
            <input aria-label="Mark number" defaultValue="2" className={clsx("w-7 h-[22px] px-0.5 mr-1 bg-black text-white", sunken)} />
            <input aria-label="Mark text" defaultValue="Mirror Sideband -85,4dB" className={clsx("w-[291px] h-[22px] px-1 bg-white text-black", sunken)} />
            <span className="w-px h-5 mx-0.5 bg-[#a0a0a0]" />
            <Toolbar tools={markTools} />
          </div>
        </div>
        <div className="h-px bg-white" />
      </div>
    </section>
  );
}

/* ---------- application frame ---------- */

const menus = ["File", "Edit", "View", "Inputs/Outputs", "Generator", "Analyzer", "Sweeps/Regulation", "Automation", "Utility", "Window", "Help"];

const userBar = ["About User Bar", "Default Config", "Setup Wizard", "Sweeps", "Multi-tones", "Digital I/O", "Applications", "Quick Tour", "Auto Sequence"];

const cell = "h-[17px] flex items-center justify-center border-t border-l border-[#a0a0a0] whitespace-nowrap";

function StatusBar() {
  return (
    <footer className="h-[19px] flex items-end bg-[#f0f0f0] border-t border-white font-['Liberation_Sans'] text-xs text-black">
      <p className="flex-1 pl-0.5 font-['Open_Sans'] text-[11px] leading-[17px]">For Help, press F1</p>
      <div className="flex gap-[3px]">
        <span className={clsx(cell, "w-4")}><Icon className="w-3.5 h-3.5"><Gauge y={1} /><path d="M2 13h12M11 11l3 2l-3 2" stroke="#000" /></Icon></span>
        <span className={clsx(cell, "w-4")}><Icon className="w-3.5 h-3.5"><path d="M1 1v9M4 2v7M7 2v7M10 2v7M14 1v9M1 1h13M1 10h13M2 13h12M11 11l3 2l-3 2" stroke="#000" strokeWidth="1.500" /></Icon></span>
        <span className={clsx(cell, "w-[41px] flex-col text-[9px] leading-[9px] text-[#909090]")}>
          S/card
          <svg viewBox="0 0 14 5" className="w-3.5 h-[5px]" fill="none" aria-hidden="true"><path d="M0 2.500h13M10 0l3 2.500l-3 2.500" stroke="#909090" /></svg>
        </span>
        <span className={clsx(cell, "w-3.5")}><Icon className="w-3 h-3"><path d="M1 6h7v-4l7 6l-7 6v-4h-7z" fill="#000" /></Icon></span>
        <span className={clsx(cell, "w-[54px]")}>Bal/unbal</span>
        <span className={clsx(cell, "w-[50px] bg-[#ff0000] text-[#500000]")}>BNC</span>
        <span className={clsx(cell, "w-[33px] flex-col bg-[#ff0000] text-[#500000] text-[8px] leading-[8px] font-bold")}><span>48k</span><span>16</span></span>
        <span className={clsx(cell, "w-4 bg-[#ff0000] text-[#500000] text-[11px]")}>CS</span>
        <span className={clsx(cell, "w-[55px] relative")}>
          <span className="absolute left-0 top-0 w-4 h-[7px] bg-[#ff0000]" />
          2
        </span>
        <span className={clsx(cell, "w-[55px]")} />
      </div>
      <nav className="flex ml-[3px] mr-[3px]">
        {[1, 2, 3, 4, 5].map((n) => (
          <button key={n} className={clsx("w-11 h-4 border border-black border-t-white rounded-b-[3px] bg-[#f8f8f8] leading-[14px] whitespace-nowrap", n < 5 ? "font-bold text-xs" : "text-[11px]")}>
            Page {n}
          </button>
        ))}
      </nav>
    </footer>
  );
}

export default function App() {
  return (
    <div className="relative min-h-screen flex flex-col bg-black pt-2 pl-px pr-0.5 pb-px overflow-hidden">
      <header className="h-[23px] flex items-center bg-[#0078d7] pl-0.5 text-white font-['Open_Sans'] text-[11px]">
        <Logo />
        <h1 className="flex-1 ml-1.5">dScope Series III - 1 Watt over 8 Ohm 2 kanalen</h1>
        <div className="flex">
          {["M3 8.500h10", "M3 5h8v8h-8zM5 5V3h8v8h-2", "M3 3l10 10M13 3L3 13"].map((d, i) => (
            <button key={d} aria-label={["Minimise", "Restore", "Close"][i]} className="w-[46px] h-[23px] flex items-center justify-center">
              <svg viewBox="0 0 16 16" className="w-4 h-4" fill="none" aria-hidden="true"><path d={d} stroke="#fff" /></svg>
            </button>
          ))}
        </div>
      </header>

      <nav className="h-5 flex items-center bg-white pl-[7px] gap-4 font-['Open_Sans'] text-[11px]">
        {menus.map((m) => <button key={m}>{m}</button>)}
      </nav>

      <div className="h-[31px] flex bg-[#f0f0f0] border-y border-[#a0a0a0]">
        <div className="flex items-center pl-[5px] pr-[7px] border-r border-[#a0a0a0]">
          <Toolbar tools={mainTools} />
        </div>
      </div>

      <div className="h-[26px] flex items-center gap-1.5 pl-2 pt-0.5 bg-[#f0f0f0] border-b-2 border-[#808080]">
        {userBar.map((b) => (
          <button key={b} className="h-5 px-[7px] bg-[#f0f0f0] border border-t-white border-l-white border-b-2 border-r-2 border-b-[#707070] border-r-[#707070] font-['Liberation_Sans'] text-[11px] leading-none whitespace-nowrap">
            {b}
          </button>
        ))}
      </div>

      <main className="relative flex-1 flex flex-col bg-[#ababab] border-l border-[#606060] pt-[7px]">
        <div className="pl-[3px] pr-1.5">
          <TraceWindow />
        </div>

        {readouts.map((r) => <Readout key={r.label} {...r} />)}
        <Legend />

        <Minimised title="Sig..." tone="plain" className="absolute left-[994px] top-[857px]" />
        <Minimised title="Ou..." tone="plain" className="absolute left-[1159px] top-[858px]" />
        <Minimised title="Ou..." tone="plain" className="absolute left-[1328px] top-[862px]" />
        <Minimised title="Co..." tone="green" className="absolute left-[1498px] top-[865px]" />

        <div className="mt-auto flex pl-px">
          <Minimised title="FFT..." tone="pink" />
          <Minimised title="Sig..." tone="plain" />
          <Minimised title="An..." tone="plain" />
          <Minimised title="FFT..." tone="active" />
        </div>
      </main>

      <StatusBar />
      <div className="h-0.5 bg-[#4cb8f4]" />

      {/* mouse pointer */}
      <svg viewBox="0 0 12 19" className="absolute left-[1324px] top-1 w-3 h-[19px] pointer-events-none" aria-hidden="true">
        <path d="M1 1v14l3 -3l2.500 5.500l2 -1l-2.500 -5.500h5z" fill="#fff" stroke="#000" />
      </svg>
    </div>
  );
}
